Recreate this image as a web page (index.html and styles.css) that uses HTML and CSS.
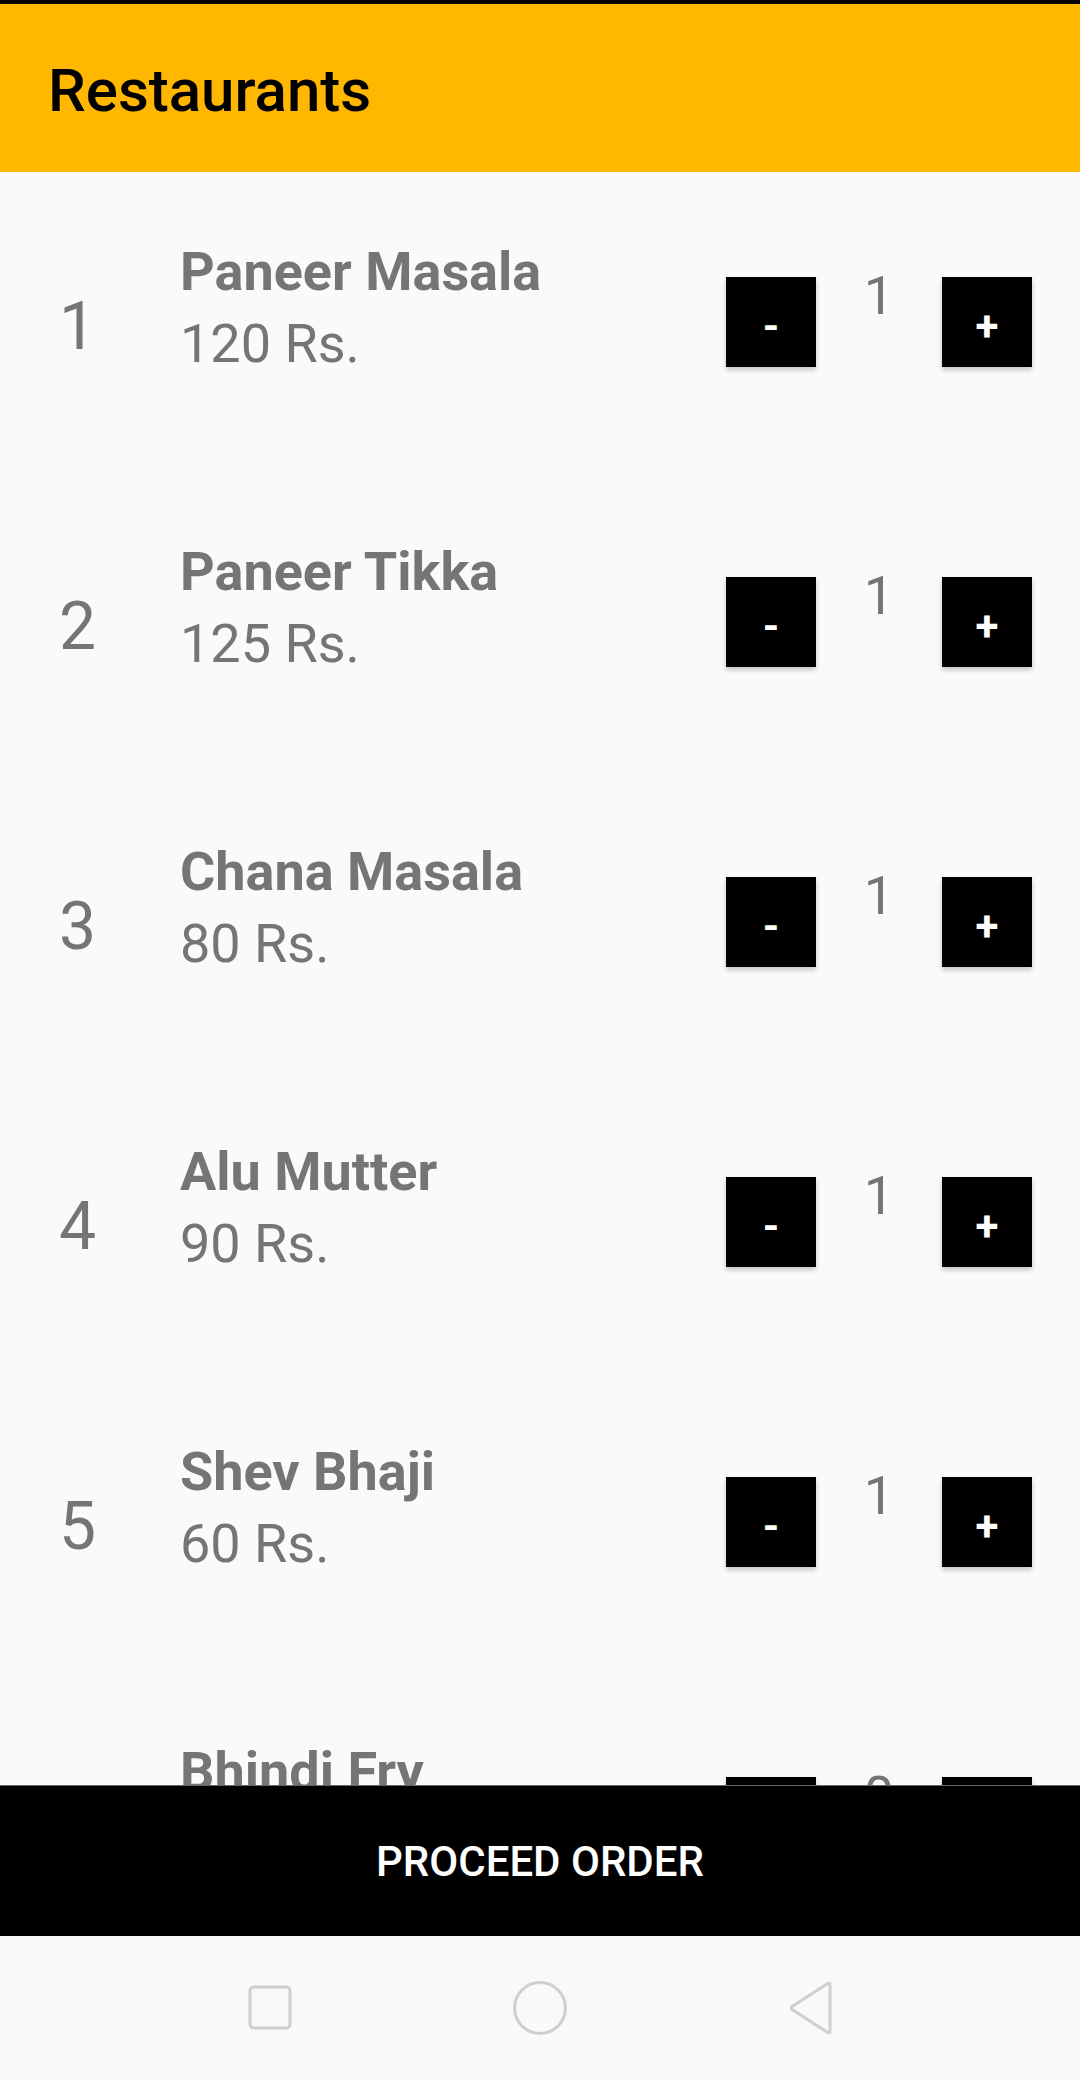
FILE: index.html
```html
<!DOCTYPE html>
<html>
<head>
<meta charset="utf-8">
<link rel="stylesheet" href="styles.css">
</head>
<body>
<div class="app">
  <div class="statusbar"></div>
  <header class="toolbar"><h1 class="title">Restaurants</h1></header>
  <main class="list">
    <div class="row">
      <div class="num">1</div>
      <div class="info"><div class="name">Paneer Masala</div><div class="price">120 Rs.</div></div>
      <div class="qty"><div class="btn"><span>-</span></div><div class="count">1</div><div class="btn"><span>+</span></div></div>
    </div>
    <div class="row">
      <div class="num">2</div>
      <div class="info"><div class="name">Paneer Tikka</div><div class="price">125 Rs.</div></div>
      <div class="qty"><div class="btn"><span>-</span></div><div class="count">1</div><div class="btn"><span>+</span></div></div>
    </div>
    <div class="row">
      <div class="num">3</div>
      <div class="info"><div class="name">Chana Masala</div><div class="price">80 Rs.</div></div>
      <div class="qty"><div class="btn"><span>-</span></div><div class="count">1</div><div class="btn"><span>+</span></div></div>
    </div>
    <div class="row">
      <div class="num">4</div>
      <div class="info"><div class="name">Alu Mutter</div><div class="price">90 Rs.</div></div>
      <div class="qty"><div class="btn"><span>-</span></div><div class="count">1</div><div class="btn"><span>+</span></div></div>
    </div>
    <div class="row">
      <div class="num">5</div>
      <div class="info"><div class="name">Shev Bhaji</div><div class="price">60 Rs.</div></div>
      <div class="qty"><div class="btn"><span>-</span></div><div class="count">1</div><div class="btn"><span>+</span></div></div>
    </div>
    <div class="row">
      <div class="num">6</div>
      <div class="info"><div class="name">Bhindi Fry</div><div class="price">70 Rs.</div></div>
      <div class="qty"><div class="btn"><span>-</span></div><div class="count">0</div><div class="btn"><span>+</span></div></div>
    </div>
  </main>
  <div class="proceed">PROCEED ORDER</div>
  <nav class="navbar">
    <div class="navcell">
      <svg width="48" height="50" viewBox="0 0 48 50"><rect x="4" y="4" width="40" height="41" rx="4" ry="4" fill="none" stroke="#cfcfcf" stroke-width="3"/></svg>
    </div>
    <div class="navcell">
      <svg width="58" height="58" viewBox="0 0 58 58"><ellipse cx="29" cy="29" rx="25.5" ry="25.5" fill="none" stroke="#cfcfcf" stroke-width="3"/></svg>
    </div>
    <div class="navcell">
      <svg width="52" height="56" viewBox="0 0 52 56"><path d="M46 5 L46 51 Q46 54 43 52 L9 30 Q5 28 9 26 L43 4 Q46 2 46 5 Z" fill="none" stroke="#cfcfcf" stroke-width="3" stroke-linejoin="round"/></svg>
    </div>
  </nav>
</div>
</body>
</html>
```

FILE: styles.css
```css
html, body {
  margin: 0;
  padding: 0;
  background: #fafafa;
}
body {
  width: 1080px;
  height: 2080px;
  overflow: hidden;
  font-family: Roboto, "Liberation Sans", sans-serif;
}
.app {
  display: flex;
  flex-direction: column;
  height: 2080px;
}
.statusbar {
  height: 4px;
  background: #000;
  flex: none;
}
.toolbar {
  height: 168px;
  flex: none;
  background: #ffb700;
  display: flex;
  align-items: center;
  padding-left: 48px;
}
.title {
  margin: 0;
  font-size: 60px;
  font-weight: 500;
  color: #000;
  padding-top: 4px;
}
.list {
  flex: 1;
  overflow: hidden;
  background: #fafafa;
}
.row {
  height: 300px;
  display: flex;
  align-items: flex-start;
  color: #757575;
}
.num {
  width: 121px;
  padding-left: 59px;
  margin-top: 116px;
  font-size: 66px;
  line-height: normal;
}
.info {
  flex: 1;
  margin-top: 68px;
  font-size: 54px;
}
.name {
  font-weight: 700;
  line-height: 63px;
}
.price {
  margin-top: 9px;
  line-height: 63px;
}
.qty {
  display: flex;
  align-items: flex-start;
  padding-right: 48px;
}
.btn {
  width: 90px;
  height: 90px;
  margin-top: 105px;
  background: #000;
  color: #fff;
  display: flex;
  align-items: center;
  justify-content: center;
  font-size: 42px;
  font-weight: 700;
  box-shadow: 0 3px 5px rgba(0, 0, 0, 0.22);
}
.btn span {
  padding-top: 8px;
}
.count {
  width: 126px;
  text-align: center;
  margin-top: 92px;
  font-size: 54px;
  line-height: normal;
  color: #757575;
}
.proceed {
  height: 150px;
  flex: none;
  background: #000;
  color: #fff;
  display: flex;
  align-items: center;
  justify-content: center;
  font-size: 42px;
  font-weight: 500;
  box-shadow: 0 -1px 0 #666;
}
.navbar {
  height: 144px;
  flex: none;
  background: #f9f9f9;
  display: flex;
  justify-content: center;
}
.navcell {
  width: 270px;
  display: flex;
  justify-content: center;
  align-items: center;
}
```
